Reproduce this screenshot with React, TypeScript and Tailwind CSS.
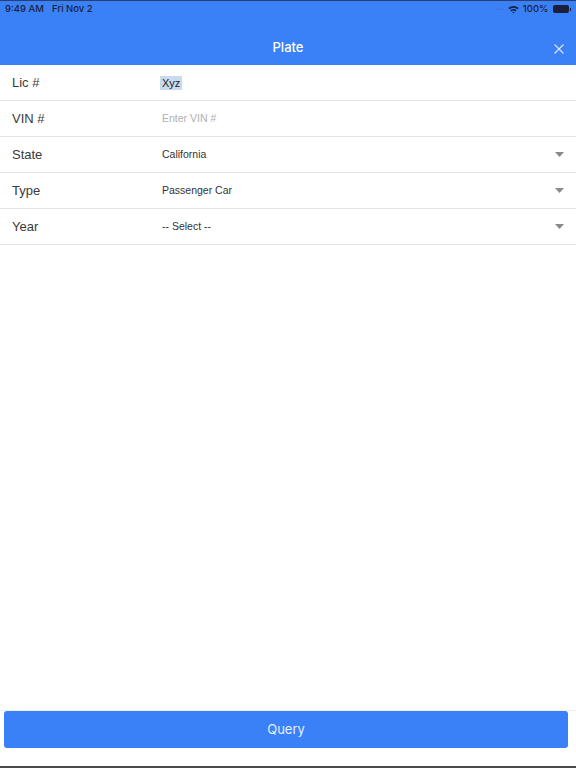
import React from "react";

const rows = [
  { label: "Lic #", kind: "text", value: "Xyz" },
  { label: "VIN #", kind: "placeholder", value: "Enter VIN #" },
  { label: "State", kind: "select", value: "California" },
  { label: "Type", kind: "select", value: "Passenger Car" },
  { label: "Year", kind: "select", value: "-- Select --" },
];

function Caret() {
  return (
    <svg width="9" height="5" viewBox="0 0 9 5" className="mr-[12px]">
      <path d="M0 0 L9 0 L4.5 5 Z" fill="#8a8a8a" />
    </svg>
  );
}

export default function App() {
  return (
    <div className="w-[576px] h-[768px] flex flex-col bg-white font-['Liberation_Sans',Arial,sans-serif] overflow-hidden">
      {/* header */}
      <div className="h-[65px] bg-[#3a80f6] flex flex-col border-t border-[#2a3f70]">
        <div className="h-[16px] flex items-center justify-between px-[5px] text-[9.5px] font-medium font-['Inter',sans-serif] text-[#1b1f3b]">
          <div className="flex gap-[8px]">
            <span>9:49 AM</span>
            <span>Fri Nov 2</span>
          </div>
          <div className="flex items-center gap-[4px]">
            <span className="text-[#5a6fa8] tracking-[-1px] -mt-[3px]">....</span>
            <svg width="11" height="9" viewBox="0 0 11 9">
              <path d="M0.3 3 A7.5 7.5 0 0 1 10.7 3 L9.5 4.3 A5.8 5.8 0 0 0 1.5 4.3 Z" fill="#1b1f3b" />
              <path d="M2.3 5.2 A4.6 4.6 0 0 1 8.7 5.2 L7.5 6.4 A2.9 2.9 0 0 0 3.5 6.4 Z" fill="#1b1f3b" />
              <path d="M4.4 7.3 A1.6 1.6 0 0 1 6.6 7.3 L5.5 8.6 Z" fill="#1b1f3b" />
            </svg>
            <span>100%</span>
            <div className="flex items-center">
              <div className="w-[16px] h-[8px] rounded-[2px] bg-[#1b1f3b]" />
              <div className="w-[1.5px] h-[3px] bg-[#1b1f3b] ml-[1px]" />
            </div>
          </div>
        </div>
        <div className="flex-1 relative flex items-center justify-center">
          <span className="text-white text-[13px] font-medium font-['Inter',sans-serif] pt-[14px]">Plate</span>
          <svg width="10" height="10" viewBox="0 0 10 10" className="absolute right-[12px] top-[27px]">
            <path d="M0.5 0.5 L9.5 9.5 M9.5 0.5 L0.5 9.5" stroke="#dbe6fd" strokeWidth="1.2" />
          </svg>
        </div>
      </div>

      {/* form rows */}
      <div className="flex flex-col">
        {rows.map((r) => (
          <div key={r.label} className="h-[36px] flex items-center border-b border-[#e3e3e3]">
            <div className="w-[162px] pl-[12px] text-[13px] text-[#3a3a3a]">{r.label}</div>
            <div className="flex-1 flex items-center justify-between">
              {r.kind === "text" && (
                <span className="text-[11px] text-[#222] bg-[#c9d9ee] px-[2px] -ml-[2px] leading-[14px]">{r.value}</span>
              )}
              {r.kind === "placeholder" && <span className="text-[10.5px] text-[#b0b0b0]">{r.value}</span>}
              {r.kind === "select" && (
                <>
                  <span className="text-[10.5px] text-[#333]">{r.value}</span>
                  <Caret />
                </>
              )}
            </div>
          </div>
        ))}
      </div>

      <div className="flex-1" />

      {/* footer */}
      <div className="border-t border-[#f0f0f0] pl-[4px] pr-[8px] pb-[18px] flex flex-col">
        <button className="h-[37px] w-full rounded-[3px] bg-[#3a80f6] text-[#e8efff] text-[13px] font-['Inter',sans-serif]">Query</button>
      </div>
      <div className="h-[2px] bg-[#4a4a4a]" />
    </div>
  );
}
